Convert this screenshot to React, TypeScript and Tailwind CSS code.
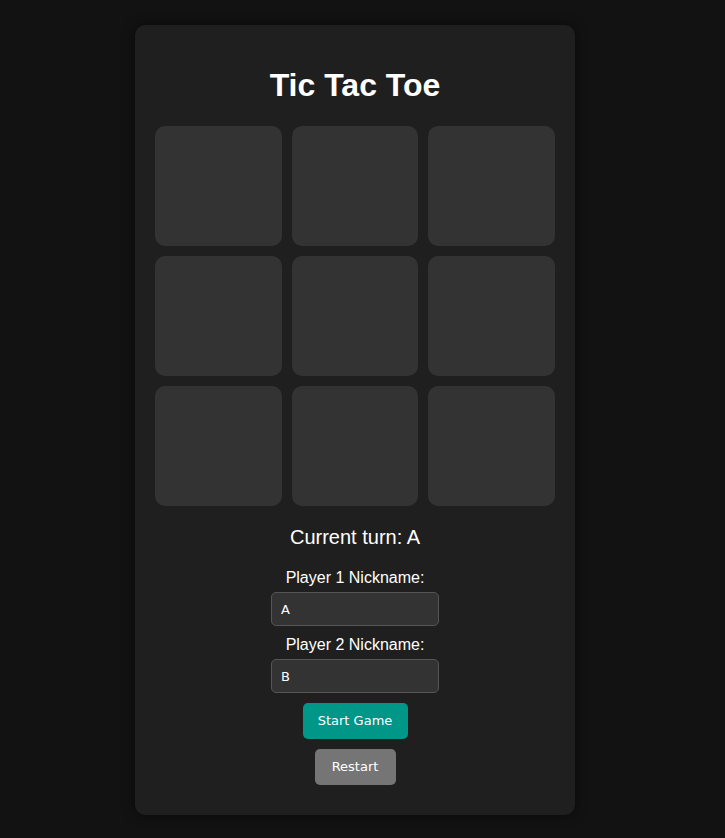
import { useState } from "react";

const Cell = ({ value, onClick }: { value: string; onClick: () => void }) => (
  <button
    onClick={onClick}
    className="h-[120px] rounded-[10px] bg-[#333333] text-white text-5xl font-bold flex items-center justify-center"
  >
    {value}
  </button>
);

export default function App() {
  const [board, setBoard] = useState<string[]>(Array(9).fill(""));
  const [p1, setP1] = useState("A");
  const [p2, setP2] = useState("B");
  const [xTurn, setXTurn] = useState(true);

  const play = (i: number) => {
    if (board[i]) return;
    const next = [...board];
    next[i] = xTurn ? "X" : "O";
    setBoard(next);
    setXTurn(!xTurn);
  };

  const restart = () => {
    setBoard(Array(9).fill(""));
    setXTurn(true);
  };

  return (
    <div className="min-h-[838px] bg-[#121212] flex justify-center pr-[15px] pt-[25px] font-['Liberation_Sans',Arial,sans-serif] text-white">
      <div className="w-[440px] h-[790px] bg-[#1f1f1f] rounded-[10px] p-5 flex flex-col items-center shadow-[0_0_12px_rgba(0,0,0,0.5)]">
        <h1 className="text-[32px] leading-[37px] font-bold mt-[22px] mb-[22px]">Tic Tac Toe</h1>

        <div className="w-full grid grid-cols-3 gap-[10px]">
          {board.map((v, i) => (
            <Cell key={i} value={v} onClick={() => play(i)} />
          ))}
        </div>

        <p className="text-[20px] leading-[23px] mt-5 mb-5">Current turn: {xTurn ? p1 : p2}</p>

        <label className="text-base leading-[18px]">Player 1 Nickname:</label>
        <input
          value={p1}
          onChange={(e) => setP1(e.target.value)}
          className="mt-[5px] w-[168px] h-[34px] px-[9px] rounded-[5px] bg-[#333333] border border-[#555555] text-white text-[13px] font-['DejaVu_Sans',sans-serif] outline-none"
        />

        <label className="text-base leading-[18px] mt-[10px]">Player 2 Nickname:</label>
        <input
          value={p2}
          onChange={(e) => setP2(e.target.value)}
          className="mt-[5px] w-[168px] h-[34px] px-[9px] rounded-[5px] bg-[#333333] border border-[#555555] text-white text-[13px] font-['DejaVu_Sans',sans-serif] outline-none"
        />

        <button
          onClick={restart}
          className="mt-[10px] h-[36px] w-[105px] rounded-[5px] bg-[#009688] text-white text-[13px] font-['DejaVu_Sans',sans-serif]"
        >
          Start Game
        </button>
        <button
          onClick={restart}
          className="mt-[10px] h-[36px] w-[81px] rounded-[5px] bg-[#757575] text-white text-[13px] font-['DejaVu_Sans',sans-serif]"
        >
          Restart
        </button>
      </div>
    </div>
  );
}
